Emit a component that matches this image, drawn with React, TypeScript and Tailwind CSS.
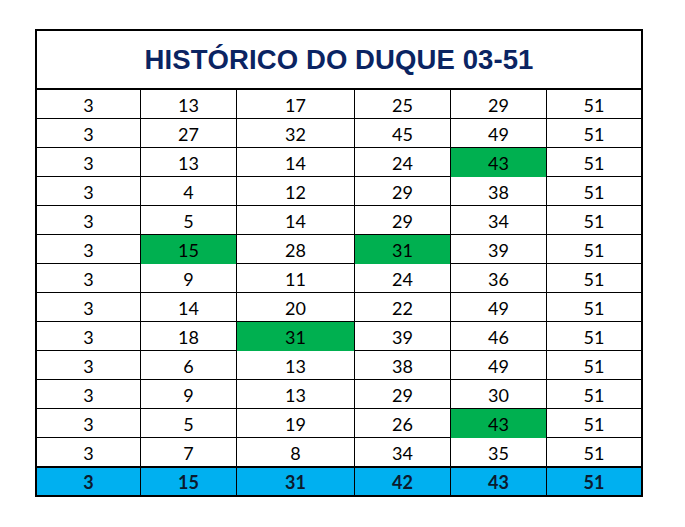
import React from "react";

const rows: (number | string)[][] = [
  [3, 13, 17, 25, 29, 51],
  [3, 27, 32, 45, 49, 51],
  [3, 13, 14, 24, "43*", 51],
  [3, 4, 12, 29, 38, 51],
  [3, 5, 14, 29, 34, 51],
  [3, "15*", 28, "31*", 39, 51],
  [3, 9, 11, 24, 36, 51],
  [3, 14, 20, 22, 49, 51],
  [3, 18, "31*", 39, 46, 51],
  [3, 6, 13, 38, 49, 51],
  [3, 9, 13, 29, 30, 51],
  [3, 5, 19, 26, "43*", 51],
  [3, 7, 8, 34, 35, 51],
];

const last = [3, 15, 31, 42, 43, 51];

const gridCols = "grid grid-cols-[104px_96px_118px_96px_96px_94px]";

export default function App() {
  return (
    <div className="w-[685px] h-[527px] bg-white pt-[29px] pl-[35px]">
      <div className="w-[608px] border-2 border-black">
        <div className="h-[59px] border-b-2 border-black flex items-center justify-center">
          <span
            className="text-[27.5px] font-bold text-[#0a2462] pt-[1px] tracking-[0.1px]"
            style={{ fontFamily: '"Liberation Sans", Arial, sans-serif' }}
          >
            HISTÓRICO DO DUQUE 03-51
          </span>
        </div>
        {rows.map((r, i) => (
          <div
            key={i}
            className={`${gridCols} ${i === rows.length - 1 ? "h-[30px] border-b-2" : "h-[29px] border-b"} border-black`}
          >
            {r.map((c, j) => {
              const s = String(c);
              const green = s.endsWith("*");
              return (
                <div
                  key={j}
                  className={`flex items-center justify-center pt-[2px] text-[18px] text-black ${j < 5 ? "border-r border-black" : ""} ${green ? "bg-[#00b050]" : ""}`}
                  style={{ fontFamily: 'Lato, "Open Sans", sans-serif' }}
                >
                  {s.replace("*", "")}
                </div>
              );
            })}
          </div>
        ))}
        <div className={`${gridCols} h-[27px] bg-[#00b0f0]`}>
          {last.map((c, j) => (
            <div
              key={j}
              className={`flex items-center justify-center pt-[1px] text-[18px] font-bold text-[#0c1a2e] ${j < 5 ? "border-r border-black" : ""}`}
              style={{ fontFamily: 'Lato, "Open Sans", sans-serif' }}
            >
              {c}
            </div>
          ))}
        </div>
      </div>
    </div>
  );
}
